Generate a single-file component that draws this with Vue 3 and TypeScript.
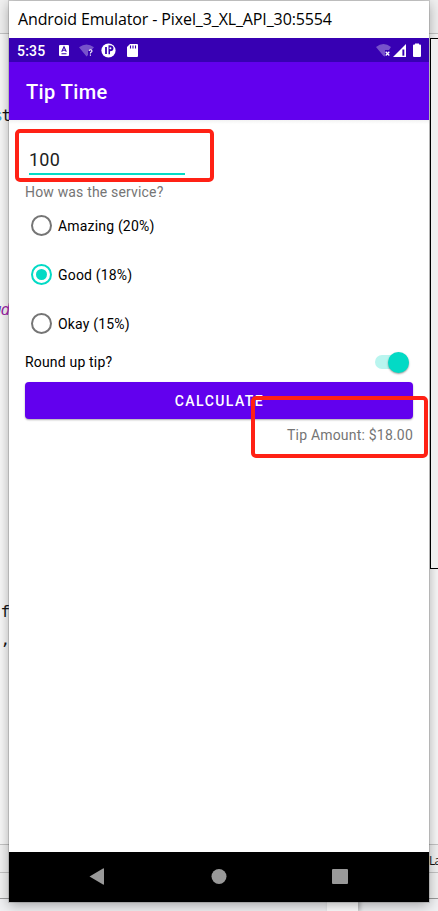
<script setup lang="ts">
import { computed, ref } from 'vue'

interface ServiceOption {
  label: string
  rate: number
}

const options: ServiceOption[] = [
  { label: 'Amazing (20%)', rate: 20 },
  { label: 'Good (18%)', rate: 18 },
  { label: 'Okay (15%)', rate: 15 },
]
const cost = ref('100')
const rate = ref(18)
const roundUp = ref(true)

function tipFor(): number {
  const tip = (Number(cost.value) * rate.value) / 100
  return roundUp.value ? Math.ceil(tip) : tip
}
const tip = ref(tipFor())
const tipText = computed(() => `Tip Amount: $${tip.value.toFixed(2)}`)
function calculate(): void {
  tip.value = tipFor()
}
</script>

<template>
  <div class="desktop">
    <div class="ide">
      <div class="ide-tools"></div>
      <div class="ide-editor"></div>
      <div class="ide-tabs"></div>
      <div class="ide-status"></div>
      <div class="taskbar"><div class="task"></div></div>
    </div>
    <div class="preview"></div>

    <main class="window">
      <header class="title">Android Emulator - Pixel_3_XL_API_30:5554</header>
      <div class="status">
        <span class="clock">5:35</span>
        <svg class="left-icons" width="82" height="16" viewBox="0 0 82 16">
          <rect x="2" y="3" width="10" height="11" rx="1" fill="#fff" />
          <path d="M4.700 9.700 7 4.800l2.300 4.900M5.600 8.300h2.800M4.500 11.800h5" fill="none" stroke="#3700b3" stroke-width="1.100" />
          <path d="M22 5.200Q29.500-.2 37 5.200L34.500 8H31v5l-1.500 1.500Z" fill="#fff" opacity=".32" />
          <path d="M32 9q.1-1.300 1.500-1.300 1.500 0 1.500 1.200 0 .8-1 1.400-.6.400-.6 1.200M33.400 12.400v1.300" fill="none" stroke="#fff" stroke-width="1.100" />
          <circle cx="51.500" cy="8.500" r="7.100" fill="#fff" />
          <path d="M49 5v7" fill="none" stroke="#3700b3" stroke-width="1.800" />
          <path d="M51.500 3.300q5-.3 5 3 0 3-3.500 3v2.900h-1.500Z" fill="#3700b3" />
          <circle cx="53.400" cy="6.300" r="1" fill="#fff" />
          <path d="M73 2h7q1 0 1 1v11q0 1-1 1h-9q-1 0-1-1V5Z" fill="#fff" />
          <path d="M73.500 3.500v3M76 3.500v3M78.500 3.500v3" stroke="#3700b3" stroke-width="1.100" />
        </svg>
        <svg class="right-icons" width="47" height="16" viewBox="0 0 47 16">
          <path d="M1 5Q8.500-1 16 5l-2 3h-4v6.500L8.500 14Z" fill="#fff" opacity=".32" />
          <path d="m10.700 9.700 3.600 3.800m0-3.800-3.600 3.800" stroke="#fff" stroke-width="1.300" />
          <path d="M18 15 31 2v13Z" fill="#fff" />
          <path d="M27.400 7.500h1.900v6.200h-1.900Z" fill="#3700b3" />
          <path d="M40 2.500V1.500h4v1h1q1 0 1 1V14q0 1-1 1h-6q-1 0-1-1V3.500q0-1 1-1Z" fill="#fff" />
        </svg>
      </div>
      <div class="appbar">Tip Time</div>
      <section class="content">
        <input v-model="cost" class="cost" type="text" aria-label="Cost of service" />
        <p class="question">How was the service?</p>
        <div class="radios">
          <label v-for="option in options" :key="option.rate" class="option">
            <input v-model="rate" type="radio" :value="option.rate" />
            <span class="ring"></span>
            <span>{{ option.label }}</span>
          </label>
        </div>
        <label class="round">
          <span>Round up tip?</span>
          <input v-model="roundUp" type="checkbox" />
          <span class="switch"><span class="thumb"></span></span>
        </label>
        <button class="calculate" @click="calculate">CALCULATE</button>
        <p class="result">{{ tipText }}</p>
      </section>
      <nav class="nav">
        <svg width="420" height="50" viewBox="0 0 420 50">
          <path d="M80.500 24.500 94 16.500q1-.5 1 .5v15q0 1-1 .5Z" fill="#999" />
          <circle cx="210" cy="24.500" r="7.500" fill="#999" />
          <rect x="323" y="17" width="16" height="15" rx="1" fill="#999" />
        </svg>
      </nav>
    </main>
    <div class="editor-edge">
      <span class="code c1"><span class="blue">s</span>t</span>
      <span class="code c2"><span class="violet">u</span>d</span>
      <span class="code c3">f</span>
      <span class="code c4"><span class="quote">"</span>,</span>
    </div>
    <span class="layout-tab">La</span>
    <div class="mark mark-cost"></div>
    <div class="mark mark-tip"></div>
  </div>
</template>

<style>
body {
  margin: 0;
  overflow: hidden;
}
</style>

<style scoped>
.desktop {
  position: relative;
  width: 438px;
  height: 911px;
  overflow: hidden;
  font-family: Roboto, sans-serif;
}
.ide {
  display: flex;
  flex-direction: column;
  height: 911px;
}
.ide > div {
  box-sizing: border-box;
}
.ide-tools {
  height: 34px;
  background: #f0f0f0;
  border-bottom: 1px solid #c4c4c4;
}
.ide-editor {
  height: 811px;
  background: #f8f8f8;
  border-bottom: 1px solid #c4c4c4;
}
.ide-tabs {
  height: 28px;
  background: #f2f2f2;
  border-bottom: 1px solid #c4c4c4;
}
.ide-status {
  height: 26px;
  background: #f2f2f2;
  border-bottom: 1px solid #999;
}
.taskbar {
  height: 12px;
  padding-left: 327px;
  background: #f0f1f3;
}
.task {
  width: 31px;
  height: 12px;
  background: #fff;
  box-shadow: 2px 0 4px #0004;
}
.editor-edge {
  position: absolute;
  top: 0;
  left: 0;
  width: 9px;
  height: 852px;
  overflow: hidden;
}
.code {
  position: absolute;
  right: 0;
  font: 16px/20px "DejaVu Sans Mono", monospace;
  letter-spacing: -1.2px;
  color: #111;
}
.c1 {
  top: 106px;
  right: -1px;
}
.c2 {
  top: 300px;
  font-style: italic;
  color: #91259b;
}
.c3 {
  top: 602px;
}
.c4 {
  top: 630px;
}
.quote {
  color: #8b20d0;
}
.blue {
  color: #3ca3dd;
}
.violet {
  color: #6045c7;
}
.preview {
  position: absolute;
  top: 38px;
  left: 430px;
  width: 20px;
  height: 529px;
  background: #efefef;
  border: 1px solid #000;
  z-index: 2;
}
.layout-tab {
  position: absolute;
  top: 853px;
  left: 429px;
  font: 12px/16px "Open Sans", sans-serif;
  letter-spacing: -0.8px;
  color: #111;
}
.window {
  position: absolute;
  top: 1px;
  left: 9px;
  display: flex;
  flex-direction: column;
  width: 420px;
  height: 901px;
  background: #fff;
  box-shadow: 0 0 0 1px #0002, 0 3px 12px #0005;
}
.title {
  height: 37px;
  padding-left: 9px;
  font: 16px/37px "Open Sans", sans-serif;
  letter-spacing: -0.12px;
  white-space: nowrap;
  color: #000;
}
.status {
  display: flex;
  align-items: center;
  height: 24px;
  padding: 0 7px 0 8px;
  background: #3700b3;
  color: #fff;
}
.clock {
  width: 40px;
  padding-top: 1px;
  font-size: 14px;
  font-weight: 500;
  letter-spacing: 0.2px;
}
.right-icons {
  margin-left: auto;
}
.appbar {
  height: 58px;
  padding-left: 17px;
  background: #6200ee;
  color: #fff;
  font-size: 20px;
  font-weight: 500;
  line-height: 60px;
  letter-spacing: 0.4px;
}
.content {
  display: flex;
  flex: 1;
  flex-direction: column;
  padding: 16px 16px 0;
  background: linear-gradient(#f2f2f2, #fff 4px);
  font-size: 14px;
}
.cost {
  box-sizing: border-box;
  width: 156px;
  height: 39px;
  margin: 0 0 0 4px;
  padding: 9px 0 0;
  border: 0;
  border-bottom: 2px solid #03dac5;
  outline: 0;
  background: transparent;
  color: #212121;
  font: 18px Roboto, sans-serif;
  letter-spacing: 0.25px;
}
.question {
  margin: 7px 0 0;
  color: #757575;
  line-height: 20px;
  letter-spacing: 0.17px;
}
.radios {
  margin-top: -1px;
}
.option {
  display: flex;
  align-items: center;
  height: 49px;
  padding-left: 6px;
  gap: 6px;
  letter-spacing: 0.18px;
  color: #000;
}
.option input,
.round input {
  position: absolute;
  opacity: 0;
}
.ring {
  display: grid;
  place-items: center;
  box-sizing: border-box;
  width: 21px;
  height: 21px;
  border: 2px solid #757575;
  border-radius: 50%;
}
input:checked + .ring {
  border-color: #03dac5;
}
input:checked + .ring::after {
  width: 11px;
  height: 11px;
  border-radius: 50%;
  background: #03dac5;
  content: "";
}
.round {
  display: flex;
  align-items: center;
  justify-content: space-between;
  height: 28px;
  padding-right: 4px;
  letter-spacing: 0.18px;
}
.switch {
  display: flex;
  align-items: center;
  justify-content: flex-start;
  width: 34px;
  height: 14px;
  border-radius: 7px;
  background: #bdbdbd;
}
input:checked + .switch {
  justify-content: flex-end;
  background: #b9f5ef;
}
.thumb {
  width: 21px;
  height: 21px;
  border-radius: 50%;
  background: #fff;
  box-shadow: 0 1px 2px #0006;
}
input:checked + .switch .thumb {
  background: #03dac5;
}
.calculate {
  flex: none;
  height: 37px;
  margin: 6px 0 0;
  padding: 0 0 0 1px;
  border: 0;
  border-radius: 4px;
  background: #6200ee;
  box-shadow: 0 1px 2px #0005;
  color: #fff;
  font: 500 14px Roboto, sans-serif;
  letter-spacing: 1.45px;
}
.result {
  margin: 6px 0 0;
  color: #757575;
  line-height: 20px;
  letter-spacing: 0.2px;
  text-align: right;
}
.nav {
  height: 50px;
  background: #000;
}
.nav svg {
  display: block;
}
.mark {
  position: absolute;
  box-sizing: border-box;
  border: 4px solid #ff2115;
  border-radius: 5px;
  pointer-events: none;
  z-index: 3;
}
.mark-cost {
  top: 129px;
  left: 15px;
  width: 199px;
  height: 53px;
}
.mark-tip {
  top: 396px;
  left: 251px;
  width: 177px;
  height: 62px;
}
</style>
